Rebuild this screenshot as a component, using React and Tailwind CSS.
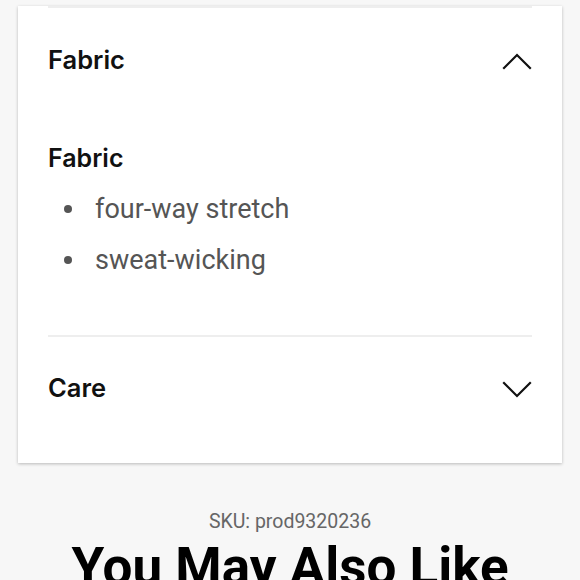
import React, { useState } from 'react';

const sections = [
  { title: 'Fabric', items: ['four-way stretch', 'sweat-wicking'] },
  { title: 'Care', items: ['machine wash cold', 'tumble dry low'] },
];

const Chevron = ({ up }) => (
  <svg width="30" height="18" viewBox="0 0 30 18" fill="none" stroke="#111" strokeWidth="2.2" strokeLinecap="square">
    {up ? <path d="M2 16 L15 3 L28 16" /> : <path d="M2 2 L15 15 L28 2" />}
  </svg>
);

export default function App() {
  const [open, setOpen] = useState('Fabric');

  return (
    <div className="min-h-screen bg-[#f7f7f7] overflow-hidden" style={{ fontFamily: 'Inter, "Noto Sans", sans-serif' }}>
      <div className="mx-[18px] bg-white shadow-[0_1px_3px_rgba(0,0,0,0.25)] px-[30px]">
        {sections.map((s) => (
          <div key={s.title} className="border-t-2 border-[#eeeeee] first:mt-[6px]">
            <button
              onClick={() => setOpen(open === s.title ? null : s.title)}
              className="w-full h-[106px] flex items-center justify-between text-left"
            >
              <span className="text-[25.5px] font-semibold text-[#111] -mt-[2px]">{s.title}</span>
              <Chevron up={open === s.title} />
            </button>
            {open === s.title && (
              <div className="pb-[49px] mt-[26px]">
                <h3 className="text-[25px] font-semibold text-[#111] mb-[6px]">{s.title}</h3>
                <ul className="text-[27px] text-[#555]" style={{ fontFamily: 'Roboto, sans-serif' }}>
                  {s.items.map((i) => (
                    <li key={i} className="leading-[51px] flex items-center">
                      <span className="w-[8px] h-[8px] rounded-full bg-[#555] ml-[16px] mr-[23px]" />
                      {i}
                    </li>
                  ))}
                </ul>
              </div>
            )}
          </div>
        ))}
        <div className="h-[20px]" />
      </div>
      <div className="text-center pt-[44px]" style={{ fontFamily: 'Roboto, sans-serif' }}>
        <p className="text-[19.5px] text-[#666]">SKU: prod9320236</p>
        <h2 className="text-[53px] font-bold text-black leading-tight mt-[-2px]">You May Also Like</h2>
      </div>
    </div>
  );
}
